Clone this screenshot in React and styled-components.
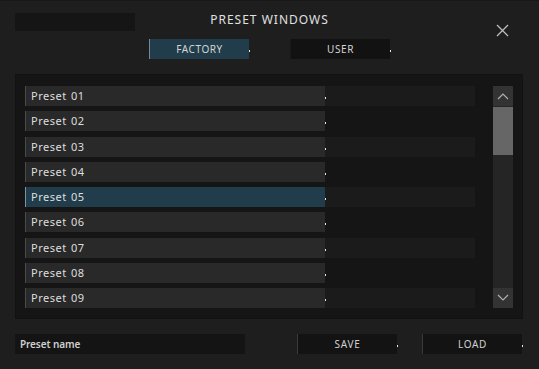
import React from "react";
import styled, { createGlobalStyle, css } from "styled-components";

const presets = [
  "Preset 01",
  "Preset 02",
  "Preset 03",
  "Preset 04",
  "Preset 05",
  "Preset 06",
  "Preset 07",
  "Preset 08",
  "Preset 09",
];

export default function App() {
  return (
    <>
      <GlobalStyle />
      <Window>
        <Header>
          <NameSlot />
          <Title>PRESET WINDOWS</Title>
          <CloseButton aria-label="close">
            <svg width="13" height="13" viewBox="0 0 13 13">
              <path d="M1 1 L12 12 M12 1 L1 12" stroke="#bdbdbd" strokeWidth="1.3" />
            </svg>
          </CloseButton>
          <Tabs>
            <Tab $active>FACTORY</Tab>
            <Tab>USER</Tab>
          </Tabs>
        </Header>

        <Panel>
          <List>
            {presets.map((name, i) => (
              <Row key={name}>
                <RowName $selected={i === 4}>{name}</RowName>
                <RowRest $alt={i % 2 === 0} />
              </Row>
            ))}
          </List>
          <Scrollbar>
            <ScrollArrow>
              <svg width="12" height="8" viewBox="0 0 12 8">
                <path d="M1 7 L6 2 L11 7" stroke="#b0b0b0" strokeWidth="1.2" fill="none" />
              </svg>
            </ScrollArrow>
            <Track>
              <Thumb />
            </Track>
            <ScrollArrow>
              <svg width="12" height="8" viewBox="0 0 12 8">
                <path d="M1 1 L6 6 L11 1" stroke="#b0b0b0" strokeWidth="1.2" fill="none" />
              </svg>
            </ScrollArrow>
          </Scrollbar>
        </Panel>

        <Footer>
          <NameField>Preset name</NameField>
          <Actions>
            <ActionButton>SAVE</ActionButton>
            <ActionButton>LOAD</ActionButton>
          </Actions>
        </Footer>
      </Window>
    </>
  );
}

const GlobalStyle = createGlobalStyle`
  html, body {
    margin: 0;
    padding: 0;
    background: #1e1e1e;
  }
  body {
    font-family: "Noto Sans", "Open Sans", "DejaVu Sans", sans-serif;
    color: #dcdcdc;
  }
`;

const Window = styled.div`
  width: 539px;
  height: 369px;
  background: #1e1e1e;
  display: flex;
  flex-direction: column;
  box-sizing: border-box;
  border-top: 1px solid #171717;
`;

const Header = styled.div`
  display: grid;
  grid-template-columns: 1fr auto 1fr;
  grid-template-rows: 18px 20px;
  row-gap: 8px;
  padding: 12px 15px 0 15px;
  height: 73px;
  box-sizing: border-box;
`;

const NameSlot = styled.div`
  width: 120px;
  height: 18px;
  background: #151515;
`;

const Title = styled.div`
  font-size: 12px;
  letter-spacing: 1px;
  color: #e0e0e0;
  line-height: 14px;
  text-align: center;
`;

const CloseButton = styled.div`
  grid-row: 1 / span 2;
  grid-column: 3;
  justify-self: end;
  align-self: start;
  margin: 11px 15px 0 0;
  width: 13px;
  height: 13px;
  display: flex;
`;

const Tabs = styled.div`
  grid-row: 2;
  grid-column: 1 / span 3;
  display: flex;
  justify-content: center;
  gap: 41px;
`;

const dot = css`
  position: relative;
  &::after {
    content: "";
    position: absolute;
    right: -1px;
    top: 55%;
    width: 1px;
    height: 2px;
    background: #e8e8e8;
  }
`;

const Tab = styled.div`
  ${dot};
  width: 100px;
  height: 20px;
  box-sizing: border-box;
  display: flex;
  align-items: center;
  justify-content: center;
  font-size: 10px;
  letter-spacing: 0.6px;
  color: #d4d4d4;
  background: ${(p) => (p.$active ? "#213d4c" : "#121212")};
  border-left: 1px solid ${(p) => (p.$active ? "#6e8c9a" : "#1a1a1a")};
`;

const Panel = styled.div`
  margin: 0 16px 0 15px;
  height: 245px;
  box-sizing: border-box;
  background: #151515;
  border: 1px solid #121212;
  display: flex;
  padding: 11px 9px 10px 9px;
  gap: 18px;
`;

const List = styled.div`
  width: 450px;
  display: flex;
  flex-direction: column;
  gap: 5.25px;
`;

const Row = styled.div`
  display: flex;
  height: 20px;
`;

const RowName = styled.div`
  ${dot};
  width: 300px;
  box-sizing: border-box;
  padding: 0 0 1px 5px;
  display: flex;
  align-items: center;
  font-size: 11px;
  letter-spacing: 0.5px;
  word-spacing: 1px;
  color: #dedede;
  background: ${(p) => (p.$selected ? "#213d4c" : "#292929")};
  border-left: 1px solid ${(p) => (p.$selected ? "#7894a0" : "#4a4a4a")};
`;

const RowRest = styled.div`
  flex: 1;
  background: ${(p) => (p.$alt ? "#1b1b1b" : "transparent")};
`;

const Scrollbar = styled.div`
  width: 20px;
  height: 222px;
  display: flex;
  flex-direction: column;
  background: #252525;
`;

const ScrollArrow = styled.div`
  height: 20px;
  background: #333333;
  display: flex;
  align-items: center;
  justify-content: center;
`;

const Track = styled.div`
  flex: 1;
  padding-top: 1px;
`;

const Thumb = styled.div`
  height: 48px;
  background: #666666;
`;

const Footer = styled.div`
  display: flex;
  align-items: center;
  padding: 15px 17px 0 15px;
`;

const NameField = styled.div`
  width: 230px;
  height: 20px;
  box-sizing: border-box;
  padding-left: 5px;
  display: flex;
  align-items: center;
  background: #141414;
  font-size: 10px;
  font-weight: 600;
  letter-spacing: -0.1px;
  color: #cfcfcf;
`;

const Actions = styled.div`
  margin-left: auto;
  display: flex;
  gap: 25px;
`;

const ActionButton = styled.div`
  ${dot};
  width: 100px;
  height: 20px;
  box-sizing: border-box;
  display: flex;
  align-items: center;
  justify-content: center;
  background: #131313;
  border-left: 1px solid #3a3a3a;
  font-size: 10px;
  letter-spacing: 0.7px;
  color: #d0d0d0;
`;
